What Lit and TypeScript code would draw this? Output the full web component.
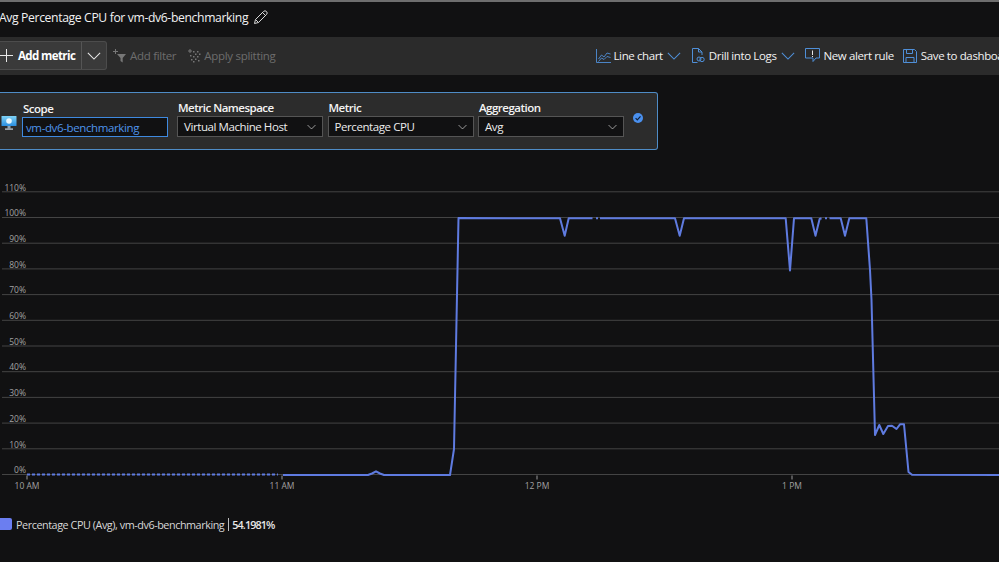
import { LitElement, html, css, svg } from "lit";
import { customElement } from "lit/decorators.js";

const chevron = (w: number, h: number) => html`<svg class="chev" width=${w} height=${h} viewBox="0 0 16 9" fill="none" stroke="currentColor" stroke-width="1.2"><path d="M1 1l7 7 7-7"/></svg>`;

const segments: [number, number][][] = [
  [
    [283, 475], [368, 475], [372, 473.5], [376, 471.3], [380, 473.5], [384, 475], [450, 475], [454, 449], [458.5, 218],
    [560, 218.3], [564.7, 235.7], [568.7, 218.3], [592.5, 218.3],
  ],
  [[596, 218.3], [598, 218.3]],
  [
    [600, 218.3], [675, 218.3], [679.7, 235.7], [684, 218.3], [785.7, 218.3], [790, 270.5], [794, 218.3],
    [811.3, 218.3], [815.5, 235.7], [819.6, 219], [821.5, 218.3],
  ],
  [[825, 218.3], [827, 218.3]],
  [
    [829.5, 218.3], [840.7, 218.3], [845, 235.7], [849.3, 218.3], [866.3, 218.3], [870, 270], [871.5, 300],
    [875, 435], [879.3, 425], [883.3, 434], [888, 426], [892, 425.7], [896.5, 429], [900, 424.3], [904, 424.3], [908.5, 472], [912, 474.7], [999, 475],
  ],
];

// chart svg starts at page y = 180
const Y0 = 180;
const poly = (p: [number, number][]) => p.map(([x, y]) => `${x},${y - Y0}`).join(" ");
const ticks = Array.from({ length: 12 }, (_, i) => i * 10);
const yOf = (v: number) => 474.5 - v * 2.57 - Y0;
const hours: [number, string][] = [[27, "10 AM"], [282, "11 AM"], [537, "12 PM"], [792, "1 PM"]];

@customElement("app-root")
export class AppRoot extends LitElement {
  static styles = css`
    :host { display: block; width: 999px; height: 562px; overflow: hidden; background: #111112; color: #f2f2f2; font-family: "Open Sans", "Noto Sans", sans-serif; font-size: 11.5px; letter-spacing: -0.38px; }
    .rule { height: 2px; background: #6e6e6e; }
    .title { height: 35px; box-sizing: border-box; padding-bottom: 5px; display: flex; align-items: center; gap: 5px; margin-left: -1px; font-size: 12.2px; letter-spacing: -0.37px; white-space: nowrap; }
    .toolbar { height: 38px; box-sizing: border-box; padding-bottom: 1px; background: #2b2b2b; display: flex; align-items: center; white-space: nowrap; }
    .split { height: 29px; width: 107px; box-sizing: border-box; display: flex; flex: none; background: #3a3a3a; border: 1px solid #4c4c4c; border-left: 0; border-radius: 0 3px 3px 0; }
    .split-main { width: 82px; display: flex; align-items: center; gap: 5px; border-right: 1px solid #555; font-weight: 700; letter-spacing: -0.6px; color: #fff; box-sizing: border-box; flex: none; }
    .split-drop { flex: 1; display: flex; align-items: center; justify-content: center; color: #e8e8e8; }
    .muted { display: flex; align-items: center; gap: 3px; color: #6d6d6d; margin-left: 5px; flex: none; letter-spacing: -0.3px; }
    .muted + .muted { margin-left: 11px; }
    .spacer { flex: none; width: 321px; }
    .actions { display: flex; align-items: center; flex: none; }
    .act { display: flex; align-items: center; gap: 4px; margin-right: 10px; }
    .act .chev { color: #4f8fd8; }
    .act:first-child svg:first-child { margin-right: -2px; }
    .act:nth-child(3) { margin-right: 9px; }
    .scope { width: 658px; height: 58px; box-sizing: border-box; margin-top: 17px; background: #2c2c2c; border: 1px solid #4f8cc6; border-left: 0; border-radius: 0 3px 3px 0; display: flex; align-items: flex-start; }
    .res { margin: 22px 5px 0 1px; flex: none; display: block; }
    .field { display: flex; flex-direction: column; margin-right: 4.5px; }
    .field.first { margin-right: 9px; }
    .label { font-weight: 600; line-height: 14px; margin-top: 8px; padding-left: 1px; color: #f4f4f4; letter-spacing: -0.5px; }
    .field.first .label { margin-top: 9px; }
    .select { width: 146px; height: 21px; box-sizing: border-box; margin-top: 1px; background: #111112; border: 1px solid #555; display: flex; align-items: center; justify-content: space-between; padding: 0 6px; color: #ececec; letter-spacing: -0.42px; }
    .select .chev { color: #dedede; }
    .input { width: 146px; height: 20px; box-sizing: border-box; margin-top: 1px; background: #111112; border: 1px solid #3f8ae0; display: flex; align-items: center; padding: 0 3px; color: #4f94ea; }
    .check { margin: 20px 0 0 4.5px; display: block; flex: none; }
    .chart { display: block; margin-top: 30px; }
    .chart text { font-family: "Open Sans", "Noto Sans", sans-serif; font-size: 8.5px; letter-spacing: 0; fill: #a2a2a2; }
    .legend { display: flex; align-items: center; height: 14px; margin-top: 17px; white-space: nowrap; font-size: 10.8px; letter-spacing: -0.44px; color: #d8d8d8; }
    .swatch { width: 12px; height: 12px; background: #6b7ef0; border-radius: 0 2px 2px 0; margin-right: 4px; }
    .value { margin-left: 4px; padding-left: 3px; border-left: 1px solid #bdbdbd; font-weight: 600; letter-spacing: -0.9px; color: #e8e8e8; line-height: 13px; }
  `;

  render() {
    return html`
      <div class="rule"></div>
      <div class="title">
        <span>Avg Percentage CPU for vm-dv6-benchmarking</span>
        <svg width="15" height="15" viewBox="0 0 15 15" fill="none" stroke="#d8d8d8" stroke-width="1"><path d="M1.5 13.5l1-4L10.5 1.5a1.6 1.6 0 0 1 3 3L5.5 12.5zM2.5 9.5l3 3M9.5 2.5l3 3"/></svg>
      </div>
      <div class="toolbar">
        <div class="split">
          <div class="split-main">
            <svg width="13" height="13" viewBox="0 0 13 13" stroke="#e8e8e8" stroke-width="1"><path d="M6.500 0v13M0 6.500h13"/></svg>
            <span>Add metric</span>
          </div>
          <div class="split-drop">${chevron(14, 8)}</div>
        </div>
        <div class="muted">
          <svg width="15" height="14" viewBox="0 0 15 14" fill="#777"><path d="M3 0h1v2h2v1H4v2H3V3H1V2h2zM5 5h9L10.700 9v4.500L8.500 12V9z"/></svg>
          <span>Add filter</span>
        </div>
        <div class="muted">
          <svg width="14" height="14" viewBox="0 0 14 14" fill="#777"><path d="M2.500 0h1v1.500H5v1H3.500V4h-1V2.500H1v-1h1.500zM6 2h1.500v1.500H6zM10 2h1.500v1.500H10zM8 4.500h1.500V6H8zM12 4.500h1.500V6H12zM3 6h1.500v1.500H3zM6 7h1.500v1.500H6zM10 7h1.500v1.500H10zM8 9.500h1.500V11H8zM4 10h1.500v1.500H4zM6 12h1.500v1.500H6zM11 11h1.500v1.500H11z"/></svg>
          <span>Apply splitting</span>
        </div>
        <div class="spacer"></div>
        <div class="actions">
          <div class="act">
            <svg width="15" height="14" viewBox="0 0 15 14" fill="none" stroke="#4f8fd8"><path d="M.5 0v13.500H15M2.500 10l3-4 2.500 2 3-4 3.500 1M2.500 12.500l3-3.500 2.500 1.500 3-3 3.500 1" stroke-width=".9"/></svg>
            <span>Line chart</span>
            ${chevron(14, 8)}
          </div>
          <div class="act">
            <svg width="14" height="15" viewBox="0 0 14 15" fill="none" stroke="#4f8fd8"><path d="M6.500 14.500H1.500V.5h6l3.500 3.500v3M7.500.5v3.500H11"/><circle cx="8" cy="11" r="2"/><circle cx="11" cy="11.500" r="2.200"/></svg>
            <span>Drill into Logs</span>
            ${chevron(14, 8)}
          </div>
          <div class="act">
            <svg width="15" height="15" viewBox="0 0 15 15" fill="none" stroke="#4f8fd8"><path d="M.5.5h14v9.500H11l-3 3.500V10H.5z"/><path d="M7.500 2.500v4.500M7.500 8v1" stroke="#e8e8e8"/></svg>
            <span>New alert rule</span>
          </div>
          <div class="act">
            <svg width="14" height="14" viewBox="0 0 14 14" fill="none" stroke="#4f8fd8"><path d="M.5.5h11l2 2v11H.5zM3.500.5v4h6v-4M3 13.500V8.500h8v5"/></svg>
            <span>Save to dashboard</span>
          </div>
        </div>
      </div>
      <div class="scope">
        <svg class="res" width="16" height="16" viewBox="0 0 16 16"><defs><linearGradient id="scr" x1="0" y1="0" x2="0" y2="1"><stop offset="0" stop-color="#7fd2f5"/><stop offset="1" stop-color="#2a8ee0"/></linearGradient></defs><rect x=".5" y="1" width="15" height="10" rx=".6" fill="url(#scr)"/><circle cx="8" cy="6" r="2.800" fill="#e8f7fd"/><rect x="6.500" y="11" width="3" height="2.500" fill="#8fa3b5"/><rect x="4" y="13.500" width="8" height="1.200" fill="#c9d3dc"/></svg>
        <div class="field first">
          <span class="label">Scope</span>
          <div class="input">vm-dv6-benchmarking</div>
        </div>
        <div class="field">
          <span class="label">Metric Namespace</span>
          <div class="select"><span>Virtual Machine Host</span>${chevron(9, 6)}</div>
        </div>
        <div class="field">
          <span class="label">Metric</span>
          <div class="select"><span>Percentage CPU</span>${chevron(9, 6)}</div>
        </div>
        <div class="field">
          <span class="label">Aggregation</span>
          <div class="select"><span>Avg</span>${chevron(9, 6)}</div>
        </div>
        <svg class="check" width="10" height="10" viewBox="0 0 10 10"><circle cx="5" cy="5" r="5" fill="#4a90ee"/><path d="M2.600 5.200l1.700 1.700 3.200-3.600" fill="none" stroke="#10203a" stroke-width="1.200"/></svg>
      </div>
      <svg class="chart" width="999" height="320" viewBox="0 0 999 320">
        ${ticks.map((v) => svg`
          <line x1="2" x2="999" y1=${yOf(v)} y2=${yOf(v)} stroke="#444" stroke-width="1"></line>
          <text x="26" y=${yOf(v) - 1.3} text-anchor="end">${v}%</text>
        `)}
        ${hours.map(([x, t]) => svg`
          <line x1=${x} x2=${x} y1=${yOf(0) + 1} y2=${yOf(0) + 5} stroke="#9a9a9a"></line>
          <text x=${x} y=${yOf(0) + 14} text-anchor="middle">${t}</text>
        `)}
        <line x1="27" x2="278" y1=${474.5 - Y0} y2=${474.5 - Y0} stroke="#5f7be0" stroke-width="2" stroke-dasharray="3 2"></line>
        ${segments.map((s) => svg`<polyline points=${poly(s)} fill="none" stroke="#5f7be0" stroke-width="2" stroke-linejoin="round"></polyline>`)}
      </svg>
      <div class="legend">
        <span class="swatch"></span>
        <span>Percentage CPU (Avg), vm-dv6-benchmarking</span>
        <span class="value">54.1981%</span>
      </div>
    `;
  }
}
